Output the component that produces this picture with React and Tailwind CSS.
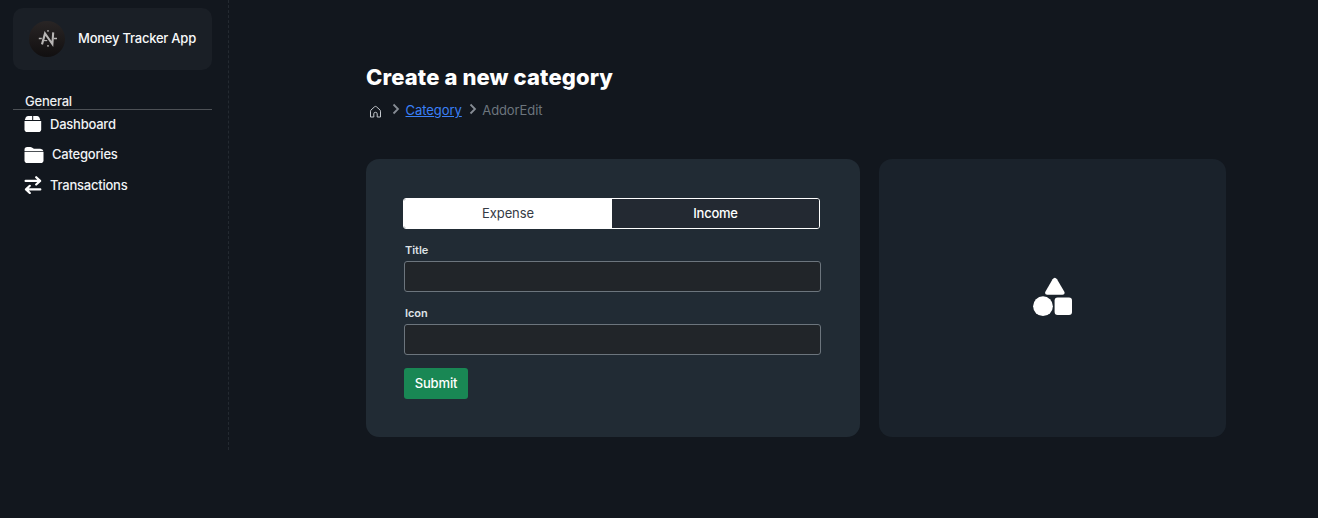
const BoxIcon = () => (
  <svg width="18" height="18" viewBox="0 0 18 18" fill="white" className="-mt-[2px] shrink-0">
    <path d="M4 1H8.2V5.1H.8L1.7 2.6Q2.3 1 4 1ZM9.2 1h4q1.7 0 2.2 1.6l.9 2.5H9.2Z" />
    <path d="M.5 6H17.2v8.2q0 2.8-2.8 2.8H3.3Q.5 17 .5 14.2Z" />
  </svg>
);

const FolderIcon = () => (
  <svg width="20" height="18" viewBox="0 0 20 18" fill="white" className="shrink-0">
    <path d="M.5 5.2V3.8Q.5 1 3.2 1h3.2q.8 0 1.5.5L9.9 2.7h6.4q2.6 0 3.2 2.5Z" />
    <path d="M.5 6.1h19v8.1q0 2.8-2.8 2.8H3.3Q.5 17 .5 14.2Z" />
  </svg>
);

const TransferIcon = () => (
  <svg width="18" height="18" viewBox="0 0 18 18" fill="none" stroke="white" strokeWidth="2.2" strokeLinecap="round" strokeLinejoin="round" className="-mt-px shrink-0">
    <path d="M1.6 4.9h14M12.2 1.2l3.9 3.7-3.9 3.6M16.3 13.4H2.3M5.8 9.8 2 13.4l3.8 3.6" />
  </svg>
);

const HomeIcon = () => (
  <svg width="13" height="13" viewBox="0 0 13 13" fill="none" stroke="#c4c9ce" className="mt-[1px] shrink-0">
    <path d="M1.5 6.2Q1.5 5.5 2 5L5.5 1.8q1-.8 2 0L11 5q.5.5.5 1.2V12H8.2V8.8q0-1.5-1.7-1.5T4.8 8.8V12H1.5Z" />
  </svg>
);

const Chevron = () => (
  <svg width="8" height="12" viewBox="0 0 8 12" fill="none" stroke="#868c94" strokeWidth="1.8" className="-mt-[4px] shrink-0">
    <path d="m1.5 1.5 4.5 4.5-4.5 4.5" />
  </svg>
);

const ShapesIcon = () => (
  <svg width="40" height="40" viewBox="0 0 40 40" fill="white" className="-mt-[2px]">
    <path d="M19.6 2.2q2.2-3 4.4 0l7.2 12.2q1.4 3-1.7 3.3H14.2q-3.1-.3-1.7-3.3Z" />
    <circle cx="10" cy="29.2" r="9.9" />
    <rect x="21.6" y="20.5" width="17.4" height="17.4" rx="3" />
  </svg>
);

const Logo = () => (
  <svg width="36" height="36" viewBox="0 0 36 36" className="shrink-0">
    <defs>
      <linearGradient id="coin" x1="0" y1="0" x2="0" y2="1">
        <stop stopColor="#292525" />
        <stop offset="1" stopColor="#110f10" />
      </linearGradient>
    </defs>
    <circle cx="18" cy="18" r="18" fill="url(#coin)" />
    <g fill="none" stroke="#b7b5b4" strokeWidth="2.1">
      <path d="m13 23.4 3-11 7.4 10.6.8-11.6" />
      <path d="M13.2 19.6h5" strokeWidth="1.1" />
      <path d="M9.8 17.5h3M25 17.5h3M19 9v1.8M19 24v1.8" strokeWidth="1.4" />
    </g>
  </svg>
);

const Field = ({ label }) => (
  <label className="ml-px flex flex-col">
    <span className="h-[18px] pl-px text-[11px] font-semibold leading-[14px] tracking-[-0.05px] text-[#dee2e6]">{label}</span>
    <input className="h-[31px] w-[417px] rounded-[3px] border border-[#6c757d] bg-[#212529] px-2 text-sm text-white outline-none" />
  </label>
);

export default function App() {
  return (
    <div className="flex h-[518px] w-full overflow-hidden bg-[#12171e] font-['Inter',sans-serif] text-[13px] text-white">
      <aside className="h-[450px] w-[229px] shrink-0 border-r border-dashed border-[#242a31] pl-[13px] pt-2 tracking-[-0.23px]">
        <div className="flex h-[62px] w-[199px] items-center gap-[13px] rounded-[10px] bg-[#1a1f26] pl-4">
          <Logo />
          <span className="whitespace-nowrap font-medium text-[#f8f9fa]">Money Tracker App</span>
        </div>
        <div className="mt-[23px] h-[17px] w-[199px] border-b border-[#4d5156] pl-3 font-medium leading-[17px] text-[#eceef0]">General</div>
        <nav className="flex flex-col pl-[11px] font-medium text-[#f1f3f5]">
          <a className="flex h-[30px] items-center gap-2"><BoxIcon />Dashboard</a>
          <a className="flex h-[30px] items-center gap-2"><FolderIcon />Categories</a>
          <a className="flex h-[31px] items-center gap-2"><TransferIcon />Transactions</a>
        </nav>
      </aside>
      <main className="ml-[137px] w-[860px] pt-[62px]">
        <h1 className="text-[22px] font-extrabold leading-[30px] tracking-[0.12px]">Create a new category</h1>
        <div className="mt-[9px] flex h-5 items-center pl-[3px] text-[#6c757d]">
          <HomeIcon />
          <span className="w-[10px]" />
          <Chevron />
          <a className="ml-[5.5px] tracking-[-0.05px] text-[#3a80f7] underline">Category</a>
          <span className="w-[7px]" />
          <Chevron />
          <span className="ml-[5.5px] tracking-[-0.1px]">AddorEdit</span>
        </div>
        <div className="mt-[38px] flex gap-[19px]">
          <section className="h-[278px] w-[494px] rounded-[13px] bg-[#212b34] pl-[37px] pt-[39px]">
            <div className="flex h-[31px] w-[417px] overflow-hidden rounded-[3px] border border-white">
              <button className="w-[208px] bg-white tracking-[-0.1px] text-[#353b45]">Expense</button>
              <button className="flex-1 bg-[#232932] font-medium tracking-[-0.23px]">Income</button>
            </div>
            <div className="mt-[14px] flex flex-col gap-[14px]">
              <Field label="Title" />
              <Field label="Icon" />
            </div>
            <button className="ml-px mt-[13px] h-[31px] w-16 rounded-[3px] bg-[#198754] font-medium tracking-[-0.15px]">Submit</button>
          </section>
          <section className="flex h-[278px] w-[347px] items-center justify-center rounded-[13px] bg-[#1a222b]">
            <ShapesIcon />
          </section>
        </div>
      </main>
    </div>
  );
}
